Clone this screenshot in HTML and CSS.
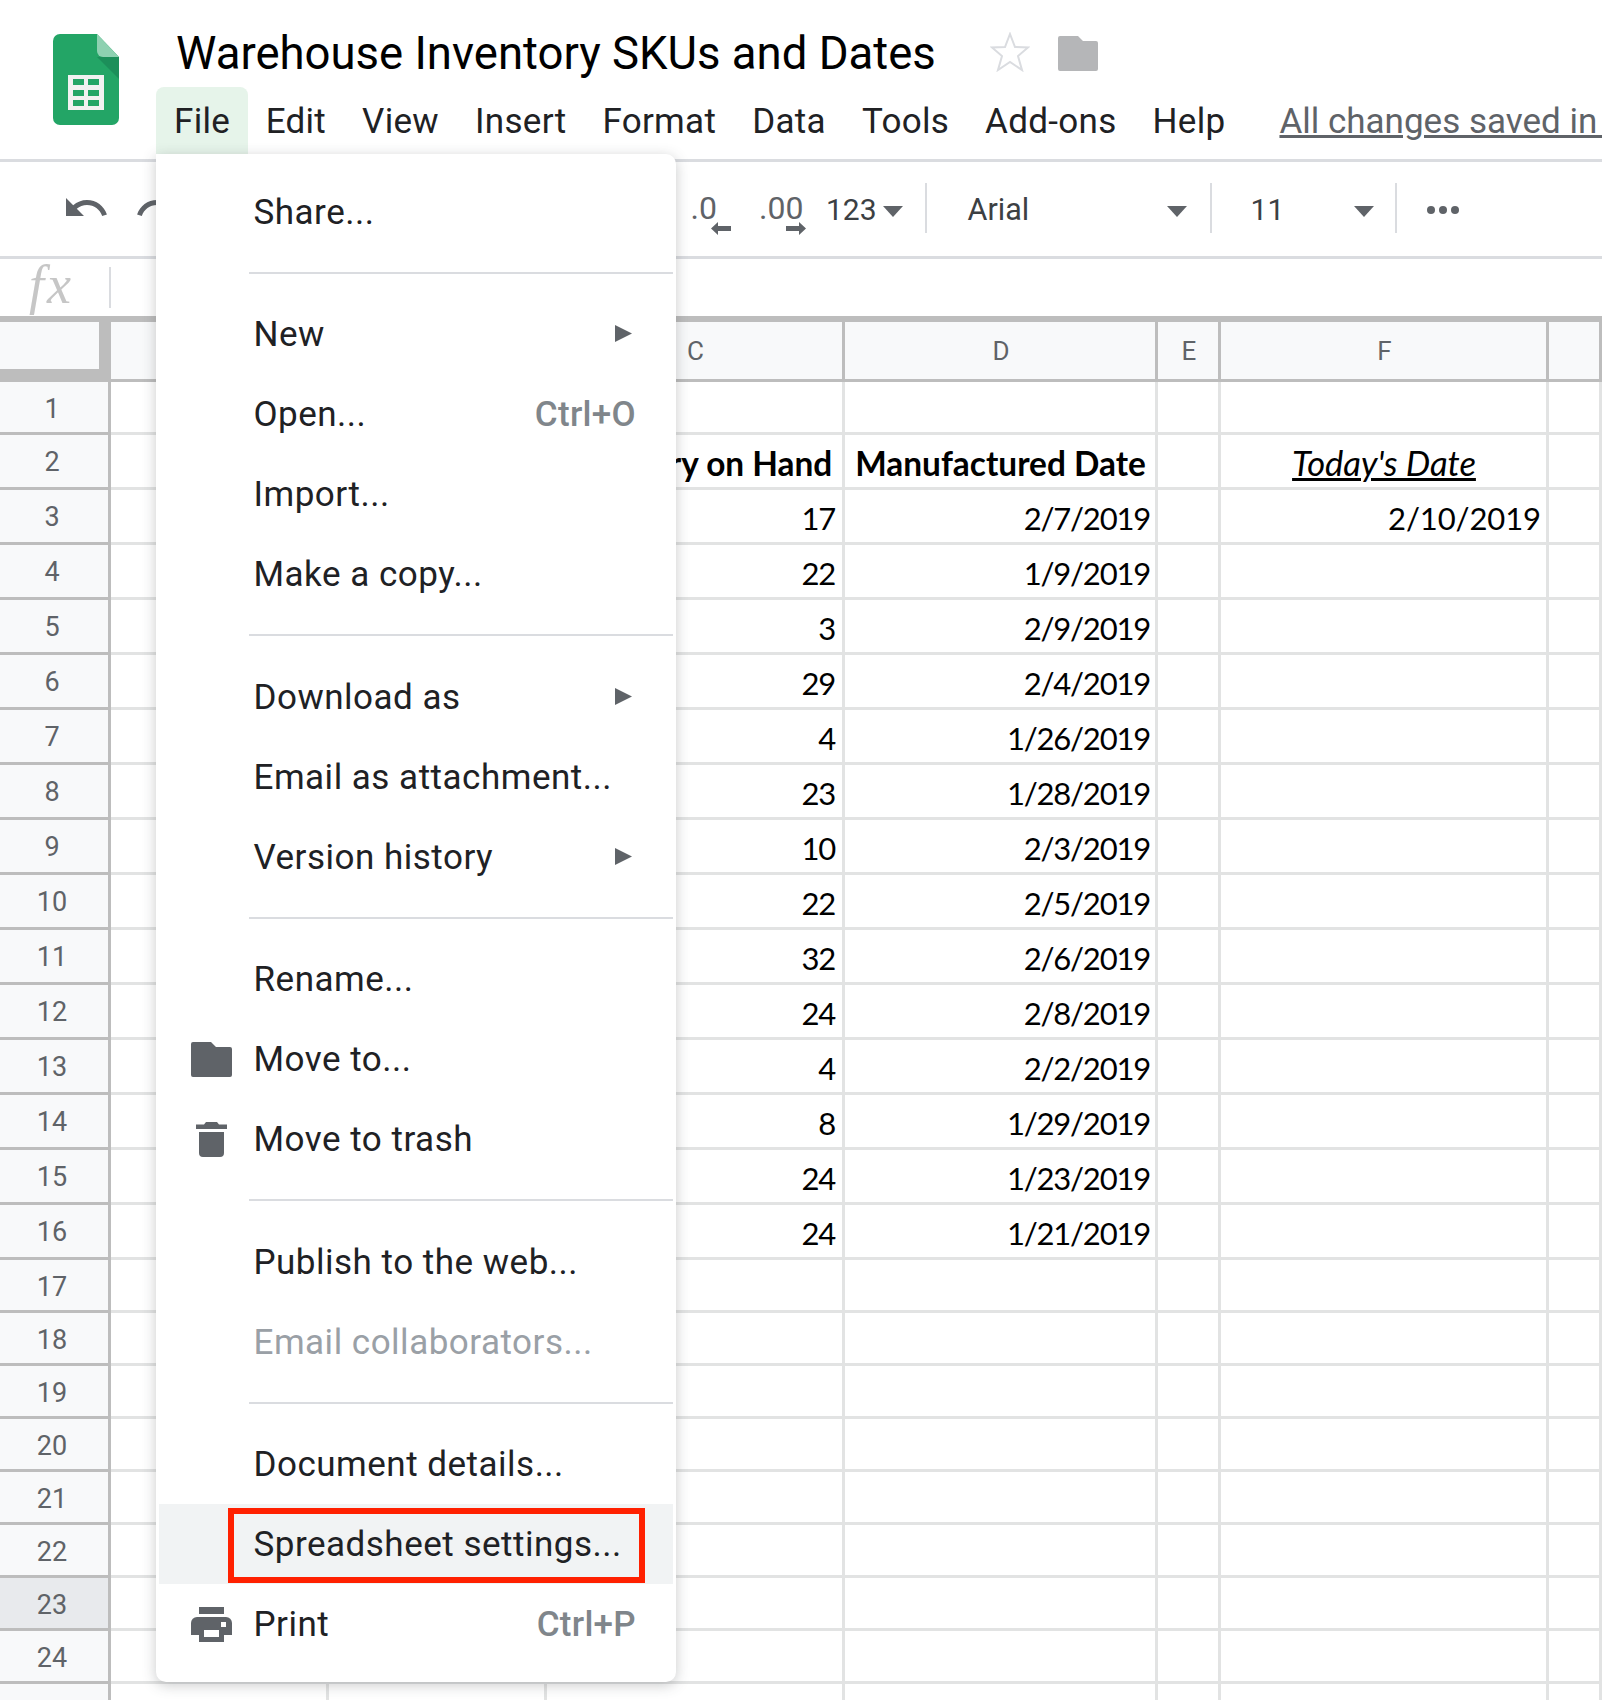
FILE: index.html
```html
<!DOCTYPE html>
<html>
<head>
    <meta charset="UTF-8">
    <title>Warehouse Inventory SKUs and Dates</title>
    <link rel="stylesheet" href="styles.css">
</head>
<body>
<div class="app">
    <header class="top">
        <svg class="logo" width="66" height="91" viewBox="0 0 66 91">
            <path d="M7 0H44L66 23V84a7 7 0 0 1-7 7H7a7 7 0 0 1-7-7V7a7 7 0 0 1 7-7z" fill="#23a566"/>
            <path d="M44 23L66 45V23z" fill="#1c8f5a"/>
            <path d="M44 0L66 23H50a6 6 0 0 1-6-6z" fill="#8ed1b1"/>
            <rect x="15" y="41" width="36" height="35" fill="#f1f1f1"/>
            <path d="M20 45h11v6H20zM35 45h11v6H35zM20 56h11v6H20zM35 56h11v6H35zM20 66h11v6H20zM35 66h11v6H35z" fill="#23a566"/>
        </svg>
        <div class="top-main">
            <div class="title-row">
                <span class="title">Warehouse Inventory SKUs and Dates</span>
                <svg class="star" width="40" height="40" viewBox="0 0 40 40">
                    <polygon points="20,2 25,15 38,15.500 28,24 32,38 20,30 8,38 12,24 2,15.500 15,15" fill="none" stroke="#dadce0" stroke-width="2"/>
                </svg>
                <svg class="title-folder" width="40" height="35" viewBox="0 0 40 35">
                    <path d="M2 0H20L25 5H38a2 2 0 0 1 2 2V33a2 2 0 0 1-2 2H2a2 2 0 0 1-2-2V2a2 2 0 0 1 2-2z" fill="#b5b6b8"/>
                </svg>
            </div>
            <nav class="menubar">
                <span class="menu-btn active">File</span>
                <span class="menu-btn">Edit</span>
                <span class="menu-btn">View</span>
                <span class="menu-btn">Insert</span>
                <span class="menu-btn">Format</span>
                <span class="menu-btn">Data</span>
                <span class="menu-btn">Tools</span>
                <span class="menu-btn">Add-ons</span>
                <span class="menu-btn">Help</span>
                <span class="saved">All changes saved in Drive</span>
            </nav>
        </div>
    </header>

    <div class="toolbar">
        <svg class="tool-undo" width="48" height="48" viewBox="0 0 24 24"><path d="M12.5 8c-2.65 0-5.05.99-6.900 2.600L2 7v9h9l-3.620-3.620c1.390-1.160 3.160-1.880 5.120-1.880 3.540 0 6.550 2.310 7.600 5.500l2.370-.78C21.080 11.030 17.150 8 12.500 8z" fill="#5f6368"/></svg>
        <svg class="tool-redo" width="48" height="48" viewBox="0 0 24 24"><path d="M18.400 10.600C16.550 8.990 14.150 8 11.500 8c-4.650 0-8.580 3.030-9.960 7.220L3.900 16c1.050-3.190 4.050-5.500 7.600-5.500 1.950 0 3.730.72 5.120 1.880L13 16h9V7l-3.600 3.600z" fill="#5f6368"/></svg>
        <div class="dec dec-less">
            <span>.0</span>
            <svg width="20" height="13" viewBox="0 0 20 13"><path d="M0 6.500L7 0V4H20V9H7V13z" fill="#5f6368"/></svg>
        </div>
        <div class="dec dec-more">
            <span>.00</span>
            <svg width="20" height="13" viewBox="0 0 20 13"><path d="M20 6.500L13 0V4H0V9H13V13z" fill="#5f6368"/></svg>
        </div>
        <span class="tool-text num-format">123</span>
        <i class="caret caret-num"></i>
        <i class="tool-sep sep-num"></i>
        <span class="tool-text font-name">Arial</span>
        <i class="caret"></i>
        <i class="tool-sep sep-font"></i>
        <span class="tool-text font-size">11</span>
        <i class="caret"></i>
        <i class="tool-sep sep-size"></i>
        <svg class="more" width="34" height="10" viewBox="0 0 34 10">
            <circle cx="5" cy="5" r="4" fill="#5f6368"/><circle cx="17" cy="5" r="4" fill="#5f6368"/><circle cx="29" cy="5" r="4" fill="#5f6368"/>
        </svg>
    </div>

    <div class="formula">
        <span class="fx">fx</span>
        <i class="fx-sep"></i>
    </div>

    <div class="grid">
        <div class="row head">
            <div class="corner"></div><div></div><div></div><div>C</div><div>D</div><div>E</div><div>F</div><div></div>
        </div>
        <div class="row r-first"><div class="rh">1</div><div></div><div></div><div></div><div></div><div></div><div></div><div></div></div>
        <div class="row"><div class="rh">2</div><div></div><div></div><div class="th">Inventory on Hand</div><div class="th">Manufactured Date</div><div></div><div class="today">Today's Date</div><div></div></div>
        <div class="row"><div class="rh">3</div><div></div><div></div><div class="n">17</div><div class="n">2/7/2019</div><div></div><div class="n loose">2/10/2019</div><div></div></div>
        <div class="row"><div class="rh">4</div><div></div><div></div><div class="n">22</div><div class="n">1/9/2019</div><div></div><div></div><div></div></div>
        <div class="row"><div class="rh">5</div><div></div><div></div><div class="n">3</div><div class="n">2/9/2019</div><div></div><div></div><div></div></div>
        <div class="row"><div class="rh">6</div><div></div><div></div><div class="n">29</div><div class="n">2/4/2019</div><div></div><div></div><div></div></div>
        <div class="row"><div class="rh">7</div><div></div><div></div><div class="n">4</div><div class="n">1/26/2019</div><div></div><div></div><div></div></div>
        <div class="row"><div class="rh">8</div><div></div><div></div><div class="n">23</div><div class="n">1/28/2019</div><div></div><div></div><div></div></div>
        <div class="row"><div class="rh">9</div><div></div><div></div><div class="n">10</div><div class="n">2/3/2019</div><div></div><div></div><div></div></div>
        <div class="row"><div class="rh">10</div><div></div><div></div><div class="n">22</div><div class="n">2/5/2019</div><div></div><div></div><div></div></div>
        <div class="row"><div class="rh">11</div><div></div><div></div><div class="n">32</div><div class="n">2/6/2019</div><div></div><div></div><div></div></div>
        <div class="row"><div class="rh">12</div><div></div><div></div><div class="n">24</div><div class="n">2/8/2019</div><div></div><div></div><div></div></div>
        <div class="row"><div class="rh">13</div><div></div><div></div><div class="n">4</div><div class="n">2/2/2019</div><div></div><div></div><div></div></div>
        <div class="row"><div class="rh">14</div><div></div><div></div><div class="n">8</div><div class="n">1/29/2019</div><div></div><div></div><div></div></div>
        <div class="row"><div class="rh">15</div><div></div><div></div><div class="n">24</div><div class="n">1/23/2019</div><div></div><div></div><div></div></div>
        <div class="row"><div class="rh">16</div><div></div><div></div><div class="n">24</div><div class="n">1/21/2019</div><div></div><div></div><div></div></div>
        <div class="row short"><div class="rh">17</div><div></div><div></div><div></div><div></div><div></div><div></div><div></div></div>
        <div class="row short"><div class="rh">18</div><div></div><div></div><div></div><div></div><div></div><div></div><div></div></div>
        <div class="row short"><div class="rh">19</div><div></div><div></div><div></div><div></div><div></div><div></div><div></div></div>
        <div class="row short"><div class="rh">20</div><div></div><div></div><div></div><div></div><div></div><div></div><div></div></div>
        <div class="row short"><div class="rh">21</div><div></div><div></div><div></div><div></div><div></div><div></div><div></div></div>
        <div class="row short"><div class="rh">22</div><div></div><div></div><div></div><div></div><div></div><div></div><div></div></div>
        <div class="row short"><div class="rh current">23</div><div></div><div></div><div></div><div></div><div></div><div></div><div></div></div>
        <div class="row short"><div class="rh">24</div><div></div><div></div><div></div><div></div><div></div><div></div><div></div></div>
        <div class="row short"><div class="rh"></div><div></div><div></div><div></div><div></div><div></div><div></div><div></div></div>
    </div>

    <div class="file-menu">
        <div class="item"><i class="slot"></i>Share...</div>
        <div class="sep"></div>
        <div class="item"><i class="slot"></i>New<svg class="sub" width="17" height="17" viewBox="0 0 17 17"><path d="M0 0L17 8.500L0 17z"/></svg></div>
        <div class="item"><i class="slot"></i>Open...<span class="key">Ctrl+O</span></div>
        <div class="item"><i class="slot"></i>Import...</div>
        <div class="item"><i class="slot"></i>Make a copy...</div>
        <div class="sep"></div>
        <div class="item"><i class="slot"></i>Download as<svg class="sub" width="17" height="17" viewBox="0 0 17 17"><path d="M0 0L17 8.500L0 17z"/></svg></div>
        <div class="item"><i class="slot"></i>Email as attachment...</div>
        <div class="item"><i class="slot"></i>Version history<svg class="sub" width="17" height="17" viewBox="0 0 17 17"><path d="M0 0L17 8.500L0 17z"/></svg></div>
        <div class="sep"></div>
        <div class="item"><i class="slot"></i>Rename...</div>
        <div class="item">
            <i class="slot"><svg width="41" height="35" viewBox="0 0 41 35"><path d="M2 0H20L25 5H39a2 2 0 0 1 2 2V33a2 2 0 0 1-2 2H2a2 2 0 0 1-2-2V2a2 2 0 0 1 2-2z"/></svg></i>Move to...
        </div>
        <div class="item">
            <i class="slot"><svg width="31" height="35" viewBox="0 0 31 35"><path d="M0 2.500H8L10 0H21L23 2.500H31V7H0zM3 10H28V31a4 4 0 0 1-4 4H7a4 4 0 0 1-4-4z"/></svg></i>Move to trash
        </div>
        <div class="sep"></div>
        <div class="item"><i class="slot"></i>Publish to the web...</div>
        <div class="item disabled"><i class="slot"></i>Email collaborators...</div>
        <div class="sep"></div>
        <div class="item"><i class="slot"></i>Document details...</div>
        <div class="item hover"><i class="slot"></i>Spreadsheet settings...<span class="callout"></span></div>
        <div class="item">
            <i class="slot"><svg width="41" height="35" viewBox="0 0 41 35"><path d="M8 0H33V7H8zM6 10H35a6 6 0 0 1 6 6V28H33V35H8V28H0V16a6 6 0 0 1 6-6z"/><path d="M13 23H28V30H13zM30 15H35V20H30z" fill="#fff"/></svg></i>Print<span class="key">Ctrl+P</span>
        </div>
    </div>
</div>
</body>
</html>
```
FILE: styles.css
```css
:root {
    --header-line: #dadce0;
    --grid-line: #e2e3e3;
    --head-line: #bdbdbd;
    --head-bg: #f8f9fa;
    --icon: #5f6368;
}

* {
    margin: 0;
    padding: 0;
    box-sizing: border-box;
}

body {
    background: #fff;
    font-family: Roboto, sans-serif;
    color: #202124;
    overflow: hidden;
}

.app {
    position: relative;
    width: 1602px;
    height: 1700px;
    overflow: hidden;
}

/* title + menu bar */
.top {
    display: flex;
    height: 162px;
    border-bottom: 3px solid var(--header-line);
}

.logo {
    margin: 34px 37px 0 53px;
    flex: none;
}

.top-main {
    flex: 1;
    min-width: 0;
}

.title-row {
    display: flex;
    align-items: center;
    height: 87px;
    padding: 20px 0 0 20px;
}

.title {
    font-size: 45.500px;
    color: #000;
    white-space: nowrap;
}

.star {
    margin-left: 54px;
    margin-top: -3px;
}

.title-folder {
    margin-left: 28px;
}

.menubar {
    display: flex;
    height: 67px;
    font-size: 35px;
    line-height: 64px;
    white-space: nowrap;
}

.menu-btn {
    padding: 3px 18px 0;
    letter-spacing: 0.3px;
}

.menu-btn.active {
    padding-right: 17.500px;
    background: #e6f4ea;
    border-radius: 8px 8px 0 0;
}

.saved {
    margin-left: 36px;
    padding-top: 3px;
    color: var(--icon);
    text-decoration: underline;
}

/* toolbar */
.toolbar {
    display: flex;
    align-items: center;
    height: 97px;
    padding-left: 62px;
    padding-bottom: 3px;
    border-bottom: 3px solid var(--header-line);
}

.tool-redo {
    margin-left: 24px;
}

.dec {
    display: flex;
    flex-direction: column;
    margin-top: 14px;
    font-size: 32px;
    line-height: 28px;
    color: var(--icon);
}

.dec-less {
    width: 40px;
    margin-left: 508.500px;
    align-items: flex-end;
}

.dec-less span {
    align-self: flex-start;
}

.dec-more {
    width: 47px;
    margin-left: 28.500px;
    align-items: flex-end;
}

.dec-more span {
    align-self: flex-start;
}

.tool-text {
    margin-top: 4px;
    font-size: 30px;
    color: #3c4043;
}

.num-format {
    margin-left: 20px;
}

.caret {
    width: 0;
    height: 0;
    border-left: 10px solid transparent;
    border-right: 10px solid transparent;
    border-top: 11px solid var(--icon);
    margin-top: 8px;
    flex: none;
}

.caret-num {
    margin-left: 6px;
}

.tool-sep {
    width: 2px;
    height: 50px;
    background: var(--header-line);
    flex: none;
}

.sep-num {
    margin: 0 41px 0 22px;
}

.sep-font {
    margin: 0 39px 0 23px;
}

.sep-size {
    margin: 0 29px 0 21px;
}

.font-name {
    width: 199px;
    font-size: 30.500px;
}

.font-size {
    width: 103px;
}

.more {
    margin-top: 4px;
}

/* formula bar */
.formula {
    display: flex;
    align-items: center;
    height: 57px;
    padding-left: 29px;
}

.fx {
    margin-top: -6px;
    font-family: "Liberation Serif", serif;
    font-style: italic;
    font-size: 54px;
    letter-spacing: 3px;
    color: #c6c6c6;
    width: 80px;
}

.fx-sep {
    width: 2px;
    height: 41px;
    background: var(--header-line);
}

/* sheet */
.grid {
    border-top: 6px solid var(--head-line);
}

.row {
    display: grid;
    grid-template-columns: 111px 218px 218px 298px 313px 63px 328px 1fr;
    grid-template-rows: minmax(0, 1fr);
    height: 55px;
}

.row > div {
    min-height: 0;
    border-right: 3px solid var(--grid-line);
    border-bottom: 3px solid var(--grid-line);
    padding: 0 7px 0 6px;
    font-family: Lato, sans-serif;
    font-size: 31px;
    letter-spacing: -1.200px;
    line-height: 56px;
    color: #000;
    white-space: nowrap;
}

.row > div:nth-child(5),
.row > div:nth-child(7) {
    padding-right: 5px;
}

.row.r-first {
    height: 52.500px;
}

.row.short {
    height: 53px;
}

.row.head {
    height: 60px;
}

.row.head > div {
    font-family: Roboto, sans-serif;
    font-size: 26px;
    letter-spacing: 0;
    line-height: 59px;
    text-align: center;
    padding: 0 6px 0 8px;
    color: var(--icon);
    background: var(--head-bg);
    border-color: var(--head-line);
}

.row.head > div.corner {
    border-right-width: 12px;
    border-bottom-width: 13px;
}

.row > div.rh {
    font-family: Roboto, sans-serif;
    font-size: 27px;
    letter-spacing: 0;
    line-height: 54px;
    text-align: center;
    color: var(--icon);
    background: var(--head-bg);
    border-color: var(--head-line);
    padding: 0 4px 0 0;
}

.row > div.rh.current {
    background: #e8eaed;
}

.row > div.n {
    text-align: right;
}

.row > div.loose {
    letter-spacing: -0.100px;
}

.row > div.th {
    font-size: 33.400px;
    font-weight: 700;
    letter-spacing: 0;
    text-align: center;
}

.row > div.today {
    font-size: 34.500px;
    font-style: italic;
    letter-spacing: 0;
    text-decoration: underline;
    text-decoration-thickness: 3px;
    text-align: center;
}

/* open file menu */
.file-menu {
    position: absolute;
    left: 156px;
    top: 154px;
    width: 520px;
    height: 1528px;
    padding: 17px 3px;
    background: #fff;
    border-radius: 0 10px 10px 10px;
    box-shadow: 0 3px 14px rgba(60, 64, 67, 0.28);
    font-size: 35px;
    letter-spacing: 0.5px;
}

.item {
    position: relative;
    display: flex;
    align-items: center;
    height: 80px;
    padding: 2px 37px 0 0;
}

.item.hover {
    background: #f1f3f4;
}

.item.disabled {
    color: #9aa0a6;
}

.slot {
    display: flex;
    justify-content: center;
    width: 41px;
    margin: 0 21.500px 0 32px;
    flex: none;
}

.slot svg {
    fill: var(--icon);
}

.sub {
    margin: -2px 4px 0 auto;
    fill: var(--icon);
}

.key {
    margin-left: auto;
    color: #80868b;
    font-weight: 500;
    letter-spacing: 0.300px;
}

.callout {
    position: absolute;
    left: 69px;
    top: 4px;
    width: 417px;
    height: 75px;
    border: 6px solid #ff2000;
}

.sep {
    height: 2px;
    margin: 20.750px 0 19.750px 90px;
    background: var(--header-line);
}
```
